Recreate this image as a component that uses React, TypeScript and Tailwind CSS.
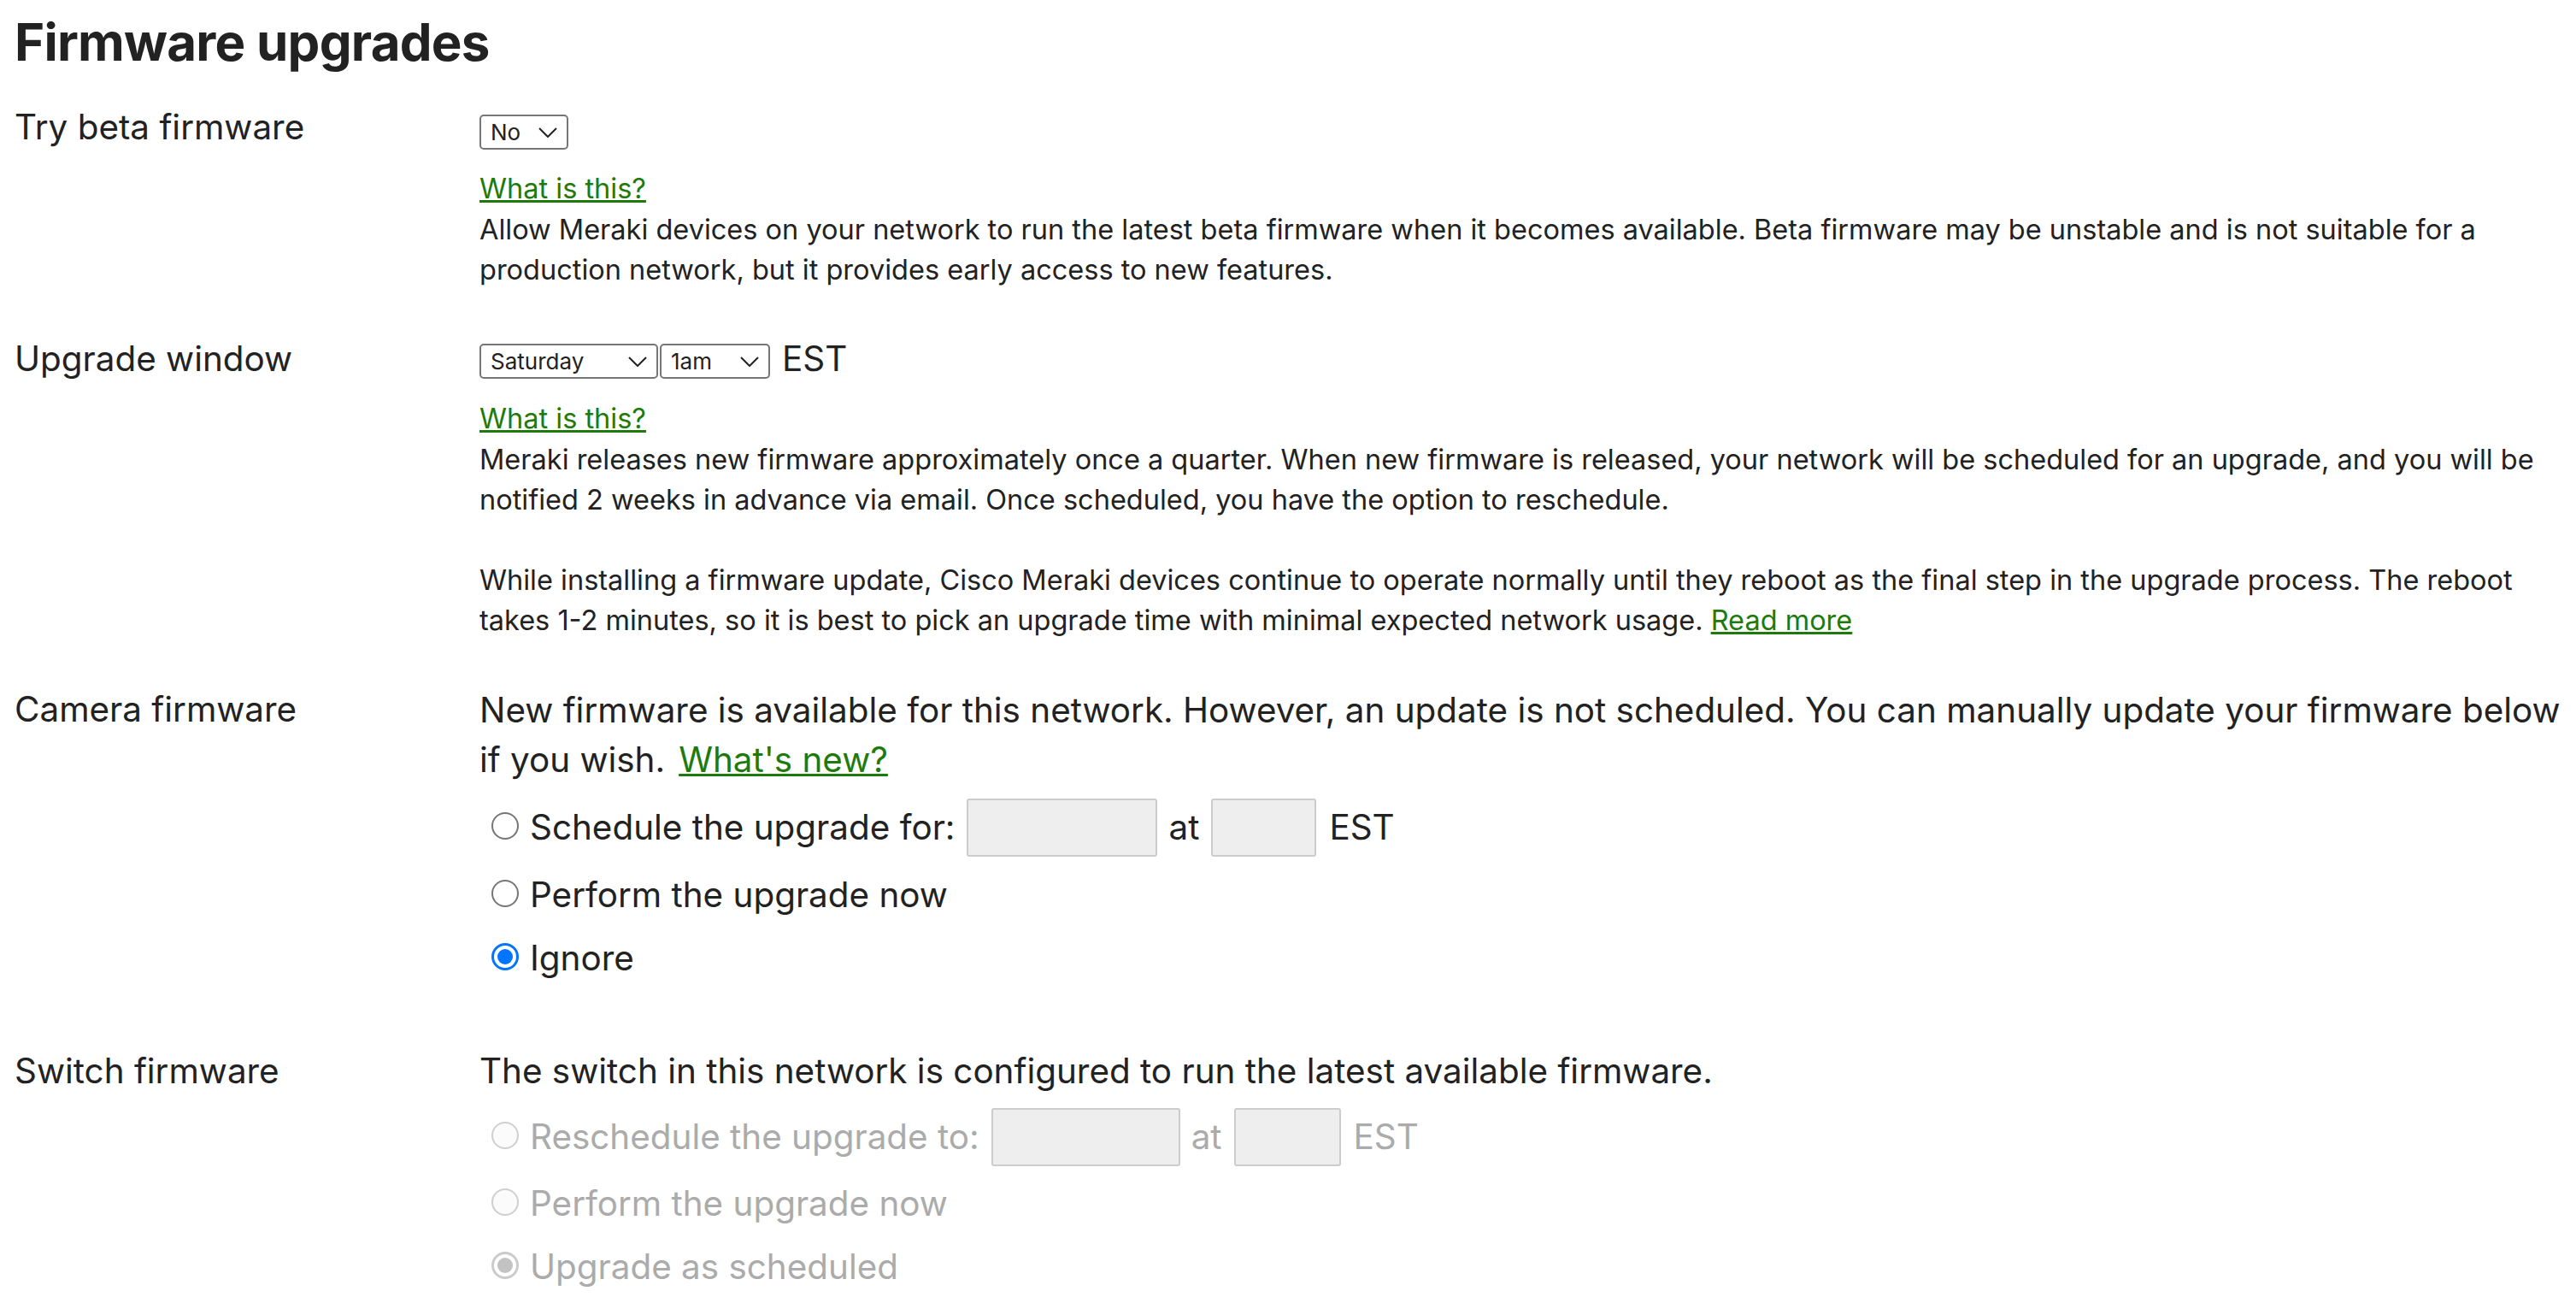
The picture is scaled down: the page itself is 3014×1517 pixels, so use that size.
import React from "react";

const Chevron = () => (
  <svg width="22" height="12" viewBox="0 0 22 12" className="shrink-0">
    <path d="M1 1 L11 11 L21 1" fill="none" stroke="#222" strokeWidth="2" />
  </svg>
);

const Select = ({ label, width }: { label: string; width: string }) => (
  <div
    className={`${width} h-[41px] border-2 border-[#767676] rounded-[5px] bg-white flex items-center justify-between pl-[11px] pr-[11px] text-[26px] leading-none text-[#222]`}
  >
    <span>{label}</span>
    <Chevron />
  </div>
);

const Radio = ({ state }: { state: "off" | "on" | "disabled" | "disabledOn" }) => {
  if (state === "on")
    return (
      <span className="ml-[14px] mr-[13px] w-[32px] h-[32px] shrink-0 rounded-full border-[3px] border-[#0075ff] bg-white flex items-center justify-center -translate-y-[2px]">
        <span className="w-[18px] h-[18px] rounded-full bg-[#0075ff]" />
      </span>
    );
  if (state === "disabledOn")
    return (
      <span className="ml-[14px] mr-[13px] w-[32px] h-[32px] shrink-0 rounded-full border-[3px] border-[#cbcbcb] bg-white flex items-center justify-center -translate-y-[2px]">
        <span className="w-[18px] h-[18px] rounded-full bg-[#c3c3c3]" />
      </span>
    );
  if (state === "disabled")
    return (
      <span className="ml-[14px] mr-[13px] w-[32px] h-[32px] shrink-0 rounded-full border-2 border-[#cfcfcf] bg-[#fbfbfb] -translate-y-[2px]" />
    );
  return (
    <span className="ml-[14px] mr-[13px] w-[32px] h-[32px] shrink-0 rounded-full border-2 border-[#767676] bg-white -translate-y-[2px]" />
  );
};

const Box = ({ width }: { width: string }) => (
  <span className={`${width} h-[68px] shrink-0 bg-[#eeeeee] border-2 border-[#cccccc] rounded-[3px]`} />
);

const Link = ({ children, className = "" }: { children: React.ReactNode; className?: string }) => (
  <a
    href="#"
    className={`text-[#1e7b0b] underline decoration-[3px] underline-offset-[2px] ${className}`}
  >
    {children}
  </a>
);

export default function App() {
  return (
    <div
      className="w-full h-[1517px] overflow-hidden bg-white text-[#222] pl-[17px]"
      style={{ fontFamily: "Inter, 'Noto Sans', sans-serif" }}
    >
      <h1 className="pt-[13px] text-[60px] leading-[72px] font-bold tracking-[-0.75px]">Firmware upgrades</h1>

      {/* Try beta firmware */}
      <div className="flex mt-[40px]">
        <div className="w-[544px] shrink-0 text-[40.4px] leading-[48px]">Try beta firmware</div>
        <div className="flex-1 min-w-0">
          <div className="mt-[9px]">
            <Select label="No" width="w-[104px]" />
          </div>
          <div className="mt-[22px] text-[32.5px] leading-[47px]">
            <Link>What is this?</Link>
            <div className="mt-[1px]">
              Allow Meraki devices on your network to run the latest beta firmware when it becomes available. Beta
              firmware may be unstable and is not suitable for a production network, but it provides early access to
              new features.
            </div>
          </div>
        </div>
      </div>

      {/* Upgrade window */}
      <div className="flex mt-[57px]">
        <div className="w-[544px] shrink-0 text-[40.4px] leading-[48px]">Upgrade window</div>
        <div className="flex-1 min-w-0">
          <div className="flex items-center mt-[6px] h-[41px]">
            <Select label="Saturday" width="w-[209px]" />
            <div className="ml-[2px]">
              <Select label="1am" width="w-[129px]" />
            </div>
            <span className="ml-[14px] text-[40.4px] leading-[48px] -translate-y-[3px]">EST</span>
          </div>
          <div className="mt-[23px] text-[32.5px] leading-[47px]">
            <Link>What is this?</Link>
            <div className="mt-[1px]">
              Meraki releases new firmware approximately once a quarter. When new firmware is released, your network
              will be scheduled for an upgrade, and you will be notified 2 weeks in advance via email. Once scheduled,
              you have the option to reschedule.
              <br />
              <br />
              While installing a firmware update, Cisco Meraki devices continue to operate normally until they reboot
              as the final step in the upgrade process. The reboot takes 1-2 minutes, so it is best to pick an upgrade
              time with minimal expected network usage. <Link>Read more</Link>
            </div>
          </div>
        </div>
      </div>

      {/* Camera firmware */}
      <div className="flex mt-[51px]">
        <div className="w-[544px] shrink-0 text-[40.4px] leading-[48px] pt-[6px]">Camera firmware</div>
        <div className="flex-1 min-w-0 text-[40.4px]">
          <div className="leading-[58px] pt-[2px]">
            New firmware is available for this network. However, an update is not scheduled. You can manually update
            your firmware below if you wish.<Link className="ml-[16px]">What's new?</Link>
          </div>
          <div className="flex items-center h-[68px] mt-[16px] leading-[48px]">
            <Radio state="off" />
            <span>Schedule the upgrade for:</span>
            <span className="ml-[14px] flex">
              <Box width="w-[223px]" />
            </span>
            <span className="ml-[13px]">at</span>
            <span className="ml-[14px] flex">
              <Box width="w-[123px]" />
            </span>
            <span className="ml-[15px]">EST</span>
          </div>
          <div className="flex items-center h-[48px] mt-[21px] leading-[48px]">
            <Radio state="off" />
            <span>Perform the upgrade now</span>
          </div>
          <div className="flex items-center h-[48px] mt-[26px] leading-[48px]">
            <Radio state="on" />
            <span>Ignore</span>
          </div>
        </div>
      </div>

      {/* Switch firmware */}
      <div className="flex mt-[78px]">
        <div className="w-[544px] shrink-0 text-[40.4px] leading-[48px] pt-[6px]">Switch firmware</div>
        <div className="flex-1 min-w-0 text-[40.4px]">
          <div className="leading-[58px] pt-[1px]">
            The switch in this network is configured to run the latest available firmware.
          </div>
          <div className="flex items-center h-[68px] mt-[14px] leading-[48px] text-[#ababab]">
            <Radio state="disabled" />
            <span>Reschedule the upgrade to:</span>
            <span className="ml-[14px] flex">
              <Box width="w-[221px]" />
            </span>
            <span className="ml-[13px]">at</span>
            <span className="ml-[14px] flex">
              <Box width="w-[125px]" />
            </span>
            <span className="ml-[15px]">EST</span>
          </div>
          <div className="flex items-center h-[48px] mt-[20px] leading-[48px] text-[#ababab]">
            <Radio state="disabled" />
            <span>Perform the upgrade now</span>
          </div>
          <div className="flex items-center h-[48px] mt-[26px] leading-[48px] text-[#ababab]">
            <Radio state="disabledOn" />
            <span>Upgrade as scheduled</span>
          </div>
        </div>
      </div>
    </div>
  );
}
